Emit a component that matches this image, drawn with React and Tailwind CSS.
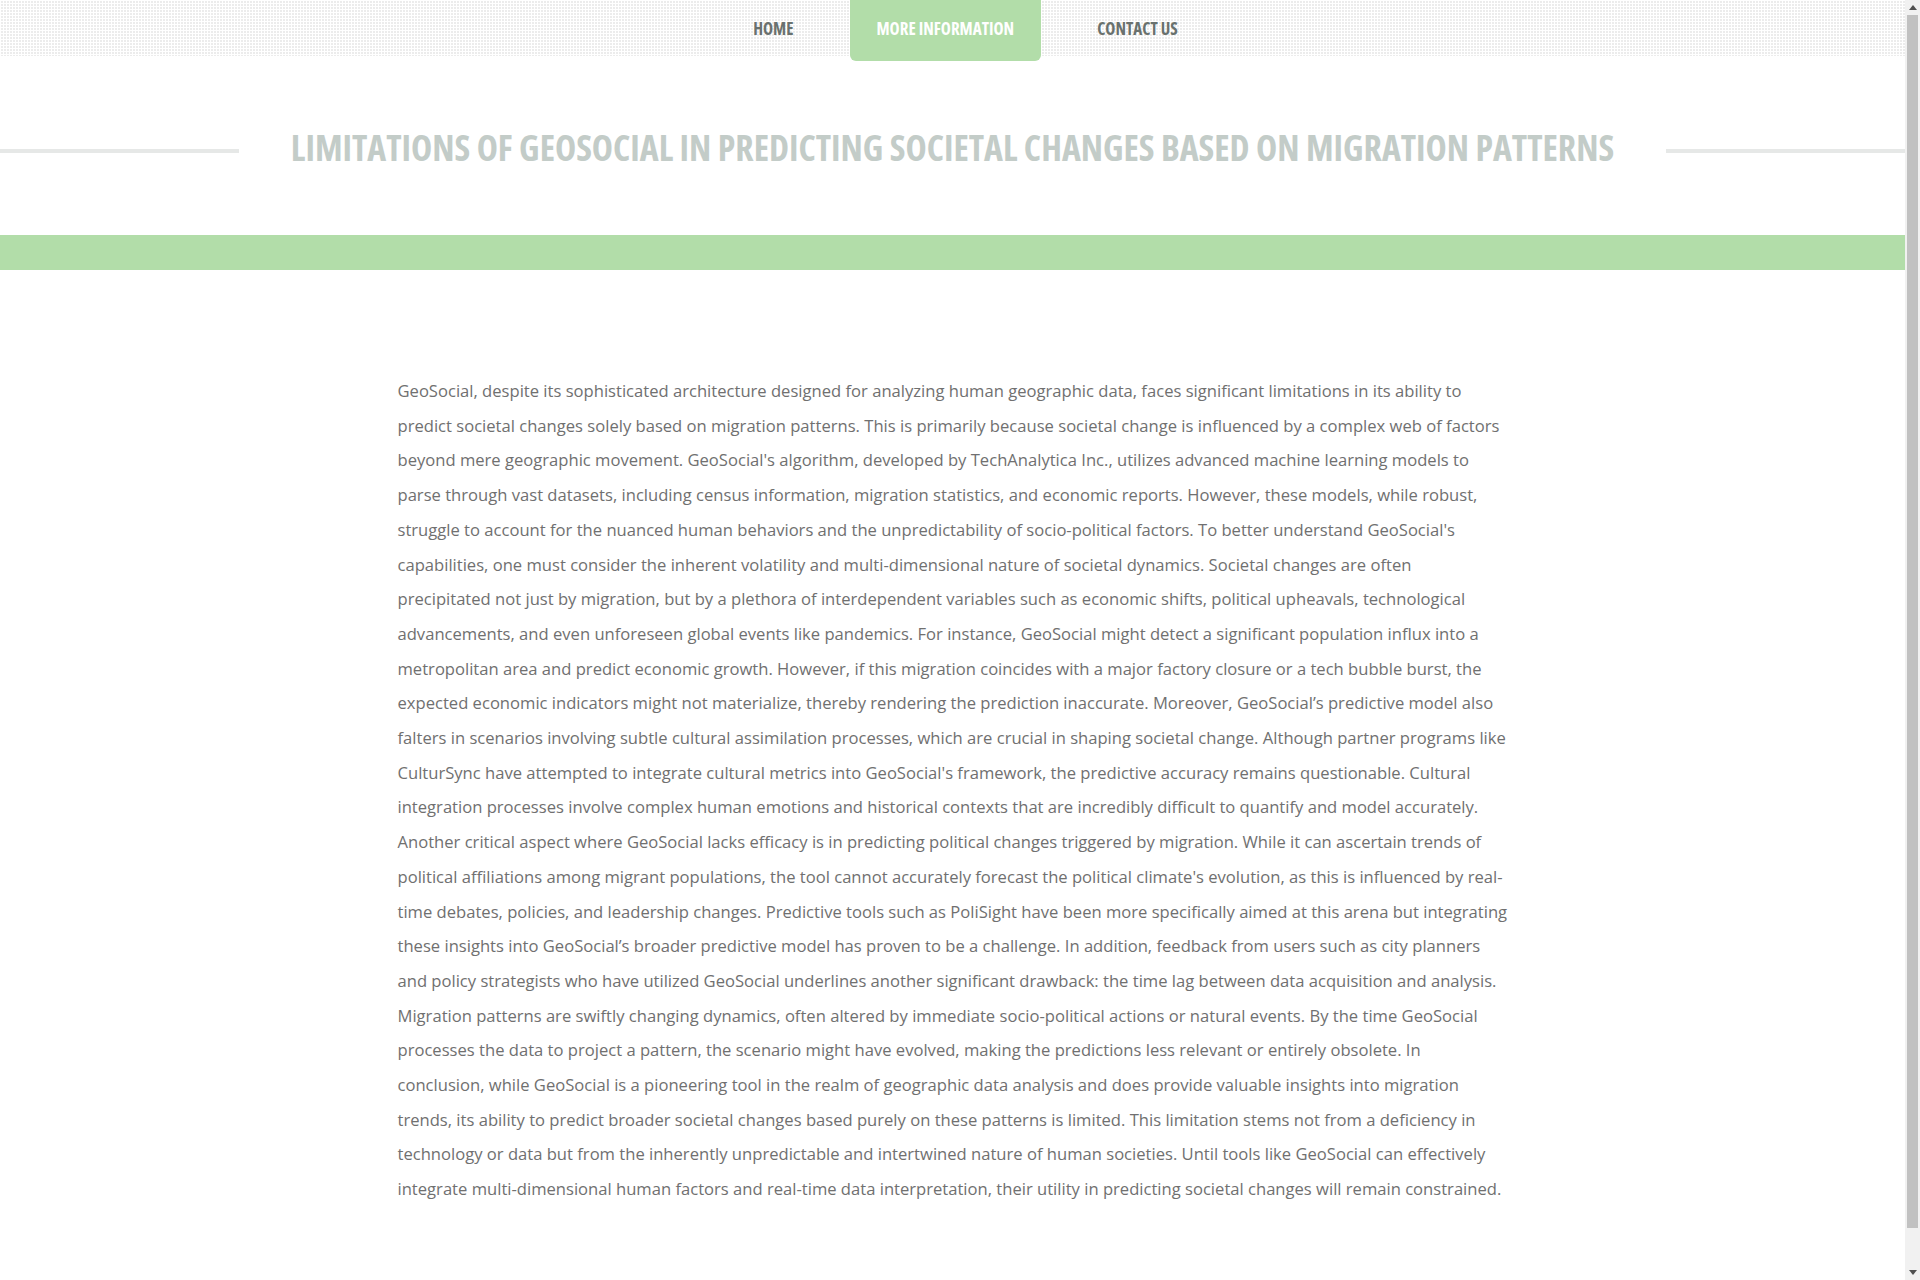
import React from "react";

/* ------------------------------ Page content ------------------------------ */
const NAV_ITEMS = [
  { label: "HOME", active: false },
  { label: "MORE INFORMATION", active: true },
  { label: "CONTACT US", active: false },
];

const ARTICLE =
  "GeoSocial, despite its sophisticated architecture designed for analyzing human geographic data, faces significant limitations in its ability to predict societal changes solely based on migration patterns. This is primarily because societal change is influenced by a complex web of factors beyond mere geographic movement. GeoSocial's algorithm, developed by TechAnalytica Inc., utilizes advanced machine learning models to parse through vast datasets, including census information, migration statistics, and economic reports. However, these models, while robust, struggle to account for the nuanced human behaviors and the unpredictability of socio-political factors. To better understand GeoSocial's capabilities, one must consider the inherent volatility and multi-dimensional nature of societal dynamics. Societal changes are often precipitated not just by migration, but by a plethora of interdependent variables such as economic shifts, political upheavals, technological advancements, and even unforeseen global events like pandemics. For instance, GeoSocial might detect a significant population influx into a metropolitan area and predict economic growth. However, if this migration coincides with a major factory closure or a tech bubble burst, the expected economic indicators might not materialize, thereby rendering the prediction inaccurate. Moreover, GeoSocial\u2019s predictive model also falters in scenarios involving subtle cultural assimilation processes, which are crucial in shaping societal change. Although partner programs like CulturSync have attempted to integrate cultural metrics into GeoSocial's framework, the predictive accuracy remains questionable. Cultural integration processes involve complex human emotions and historical contexts that are incredibly difficult to quantify and model accurately. Another critical aspect where GeoSocial lacks efficacy is in predicting political changes triggered by migration. While it can ascertain trends of political affiliations among migrant populations, the tool cannot accurately forecast the political climate's evolution, as this is influenced by real-time debates, policies, and leadership changes. Predictive tools such as PoliSight have been more specifically aimed at this arena but integrating these insights into GeoSocial\u2019s broader predictive model has proven to be a challenge. In addition, feedback from users such as city planners and policy strategists who have utilized GeoSocial underlines another significant drawback: the time lag between data acquisition and analysis. Migration patterns are swiftly changing dynamics, often altered by immediate socio-political actions or natural events. By the time GeoSocial processes the data to project a pattern, the scenario might have evolved, making the predictions less relevant or entirely obsolete. In conclusion, while GeoSocial is a pioneering tool in the realm of geographic data analysis and does provide valuable insights into migration trends, its ability to predict broader societal changes based purely on these patterns is limited. This limitation stems not from a deficiency in technology or data but from the inherently unpredictable and intertwined nature of human societies. Until tools like GeoSocial can effectively integrate multi-dimensional human factors and real-time data interpretation, their utility in predicting societal changes will remain constrained.";

/* ------------------------------ Top navigation ------------------------------ */
function TopNav() {
  return (
    <header className="h-[56px] bg-[#ececec] bg-[linear-gradient(90deg,#ffffff_1px,transparent_1px),linear-gradient(#ffffff_1px,transparent_1px)] bg-[size:3px_3px]">
      <nav className="flex justify-center pl-[26px]">
        <ul className="flex gap-[29px]">
          {NAV_ITEMS.map((item) => (
            <li key={item.label}>
              <a
                href="#"
                className={
                  item.active
                    ? "flex h-[61px] items-start justify-center rounded-b-[6px] bg-[#b2dda9] px-[27px] pt-[16px] text-[17px] font-bold text-white font-stretch-condensed"
                    : "flex h-[56px] items-start justify-center px-[27px] pt-[16px] text-[17px] font-bold text-[#69716e] font-stretch-condensed"
                }
              >
                {item.label}
              </a>
            </li>
          ))}
        </ul>
      </nav>
    </header>
  );
}

/* ------------------------------ Page title ------------------------------ */
function PageTitle() {
  return (
    <div className="flex items-center pt-[68px] pb-[65px]">
      <div className="mt-[7px] h-[4px] flex-1 bg-[#e6e8e7]" />
      <h1 className="px-[52px] text-[35.8px] leading-[46px] font-bold text-[#c3ccc8] font-stretch-condensed whitespace-nowrap">
        LIMITATIONS OF GEOSOCIAL IN PREDICTING SOCIETAL CHANGES BASED ON MIGRATION PATTERNS
      </h1>
      <div className="mt-[7px] h-[4px] flex-1 bg-[#e6e8e7]" />
    </div>
  );
}

/* ------------------------------ Window scrollbar ------------------------------ */
function ScrollRail() {
  return (
    <aside className="flex h-full w-[15px] flex-col bg-[#f1f1f1]">
      <div className="flex h-[15px] items-center justify-center">
        <svg width="8" height="5" viewBox="0 0 8 5">
          <path d="M0 5 L4 0 L8 5 Z" fill="#505050" />
        </svg>
      </div>
      <div className="mx-[2px] h-[1213px] bg-[#c1c1c1]" />
      <div className="flex-1" />
      <div className="flex h-[15px] items-center justify-center">
        <svg width="8" height="5" viewBox="0 0 8 5">
          <path d="M0 0 L8 0 L4 5 Z" fill="#505050" />
        </svg>
      </div>
    </aside>
  );
}

export default function App() {
  return (
    <div className="flex h-screen overflow-hidden bg-white font-['Open_Sans',sans-serif]">
      <div className="min-w-0 flex-1">
        <TopNav />
        <PageTitle />

        {/* green band */}
        <div className="h-[35px] bg-[#b2dda9]" />

        {/* article body */}
        <main className="mx-auto w-[1140px] px-[15px] pt-[104px] pb-[110px]">
          <p className="text-[16.6px] leading-[34.7px] text-[#707070]">{ARTICLE}</p>
        </main>
      </div>
      <ScrollRail />
    </div>
  );
}
